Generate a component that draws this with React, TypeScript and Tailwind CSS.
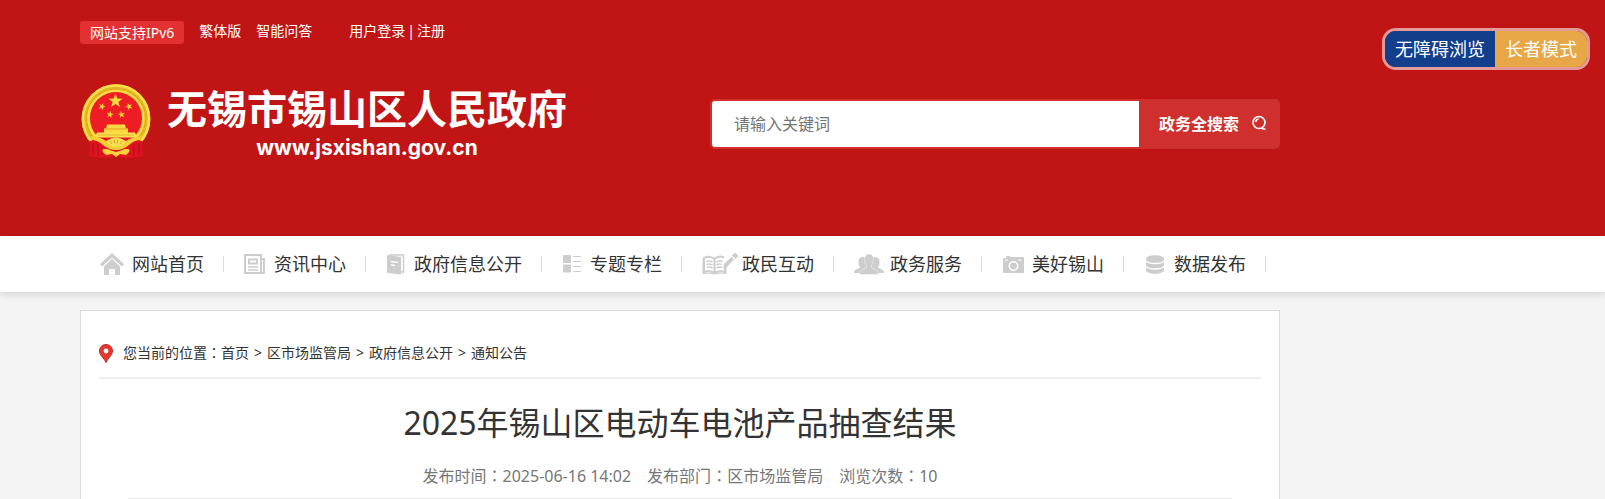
import React from "react";

const star = (cx: number, cy: number, r: number, rot = 0) =>
  Array.from({ length: 10 }, (_, i) => {
    const a = ((rot - 90 + i * 36) * Math.PI) / 180;
    const q = i % 2 ? r * 0.4 : r;
    return `${(cx + q * Math.cos(a)).toFixed(2)},${(cy + q * Math.sin(a)).toFixed(2)}`;
  }).join(" ");

function Emblem() {
  return (
    <svg viewBox="0 0 70 75" className="h-[75px] w-[70px] shrink-0" aria-hidden="true">
      <ellipse cx="35" cy="35" rx="34.500" ry="35" fill="#e3b726" />
      <ellipse cx="35" cy="35" rx="33" ry="33.500" fill="none" stroke="#fbe04a" strokeWidth="2.500" />
      <circle cx="35" cy="34.500" r="29.500" fill="none" stroke="#d8a422" strokeWidth="1" strokeDasharray="4 2" />
      <circle cx="35" cy="34.500" r="27.500" fill="none" stroke="#f9dc42" strokeWidth="2.500" />
      <circle cx="35" cy="34" r="26" fill="#ee1c25" />
      <polygon points={star(34.5, 17, 7.5)} fill="#fbd93a" />
      <polygon points={star(21, 22.5, 3.8, 20)} fill="#f7ce36" />
      <polygon points={star(48, 22.5, 3.8, -20)} fill="#f7ce36" />
      <polygon points={star(29, 30.5, 3.8, 10)} fill="#f7ce36" />
      <polygon points={star(40.5, 30.5, 3.8, -10)} fill="#f7ce36" />
      <path d="M26 40.500h18l1 4h2v5H23v-5h2z" fill="#f9d840" />
      <path d="M24 45h22" stroke="#d9a426" />
      <path d="M16 48.500h38l2 5H14z" fill="#fade4b" />
      <path d="M17 51h36" stroke="#dfae2b" strokeWidth=".8" />
      <path d="M11 54h48l-1 19-12 1-11-2-11 2-12-1z" fill="#e3131f" />
      <path d="M10 52 Q20 53 25 57 Q30 61 35 61 Q40 61 45 57 Q50 53 60 52 L59 56 Q52 57 48 61 Q42 66 35 66 Q28 66 22 61 Q18 57 11 56Z" fill="#f4cd37" />
      <path d="M25 57 Q35 50 45 57 Q41 63 35 63 Q29 63 25 57Z" fill="#fbdf4e" />
      <path d="M29 57l2 3M33 55.500l1 4M37 55.500l-1 4M41 57l-2 3" stroke="#d49a20" strokeWidth=".9" />
      <path d="M20 66q5-2 10 .5l5 1.500 5-1.500q5-2.500 10-.5l-5 5-6-1-4 3-4-3-6 1z" fill="#f8d43a" />
      <path d="M9 57q6-2 11 3 3 4 1 9l-1 5q-3-3-6-1-3 1-6-2zM61 57q-6-2-11 3-3 4-1 9l1 5q3-3 6-1 3 1 6-2z" fill="#dd1420" />
      <path d="M12 59v12M17 60v12M58 59v12M53 60v12" stroke="#ab0c17" />
    </svg>
  );
}

const G = "#cdcdcd";

const HomeIcon = () => (
  <svg viewBox="0 0 24 22" className="h-[22px] w-6" fill={G}>
    <path d="M12 0L24 11l-2 2.500L12 4.500 2 13.500 0 11z" />
    <path d="M12 6l8 7.500V22h-5v-6H9v6H4v-8.500z" />
  </svg>
);
const NewsIcon = () => (
  <svg viewBox="0 0 21 21" className="h-[21px] w-[21px]" fill="none" stroke={G} strokeWidth="2">
    <path d="M1 1h16v18H1zM17 5h3v14H3" />
    <path d="M5 5.500h8v4H5z" />
    <path d="M4 13h10M4 16h10" strokeWidth="1.500" />
  </svg>
);
const BookIcon = () => (
  <svg viewBox="0 0 18 21" className="h-[21px] w-[18px]">
    <path d="M2 1h14.500v17H13" fill="none" stroke={G} strokeWidth="1.500" />
    <path d="M0 2q0-1 1-1l13 2v17.500L1 19q-1 0-1-1z" fill={G} />
    <path d="M4 7.500l7 1M4 11l4 .5" stroke="#fff" strokeWidth="1.500" />
  </svg>
);
const ListIcon = () => (
  <svg viewBox="0 0 18 18" className="h-[18px] w-[18px]">
    <rect width="8" height="8" rx="1" fill={G} />
    <rect y="9.500" width="8" height="8" rx="1" fill={G} />
    <path d="M10 1.500h8M10 6.500h8M10 11.500h8M10 16.500h8" stroke={G} strokeWidth="1.200" />
  </svg>
);
const OpenBookIcon = () => (
  <svg viewBox="0 0 36 22" className="h-[22px] w-9" fill="none" stroke={G}>
    <path d="M12.500 6Q8 2 2 5v14q6-2 10.500 1Q17 17 23 19v-6M12.500 6Q17 2 22 4.500M12.500 6v14" strokeWidth="2" />
    <path d="M1 6v14.500q6-1 11.500.5Q18 19.500 24 20.500V14" />
    <path d="M4.500 8.500q3-1 6 .5M4.500 11.500q3-1 6 .5M4.500 14.500q3-1 6 .5M14.500 9q3-1.500 6-.5M14.500 12q3-1.500 5-.5M14.500 15q3-1.500 6-.5" strokeWidth="1.500" />
    <path d="M21 15l1.500-4.500 7-6.500 2.500 2.500-6.500 7z" fill={G} stroke="none" />
    <path d="M30.500 2.500L33 0l3 3-2.500 2.500z" fill={G} stroke={G} />
  </svg>
);
const PeopleIcon = () => (
  <svg viewBox="0 0 30 21" className="h-[21px] w-[30px]" fill={G}>
    <path d="M8 3q3-1 3.500 2 0 5 2 8l-5 3-1 3H0q0-3 3-4 3-1 3-2Q4 11 4.500 7 4.500 4 8 3z" />
    <path d="M22 3q-3-1-3.500 2 0 5-2 8l5 3 1 3H30q0-3-3-4-3-1-3-2 2-2 1.500-6 0-3-3.500-4z" />
    <path d="M15 0c3 0 4.500 2 4.500 5 0 3-1 5-2 6.500v2q1 1 4 2 3 1 3 5h-19q0-4 3-5 3-1 4-2v-2c-1-1.500-2-3.500-2-6.500 0-3 1.500-5 4.500-5z" stroke="#fff" strokeWidth=".4" />
  </svg>
);
const CameraIcon = () => (
  <svg viewBox="0 0 21 19" className="h-[19px] w-[21px]">
    <path d="M1 3h2V1h4v1h13q1 0 1 1v14q0 1-1 1H1q-1 0-1-1V4q0-1 1-1z" fill={G} />
    <circle cx="10.500" cy="11" r="4.200" fill="none" stroke="#fff" strokeWidth="1.600" />
    <path d="M15 5h4M2 5h3" stroke="#fff" strokeWidth="1.200" />
  </svg>
);
const DataIcon = () => (
  <svg viewBox="0 0 18 19" className="h-[19px] w-[18px]">
    <path d="M0 4c0-5 18-5 18 0v11c0 5-18 5-18 0z" fill={G} />
    <path d="M0 5.500c2 4 16 4 18 0M0 11c2 4 16 4 18 0" fill="none" stroke="#fff" strokeWidth="1.300" />
  </svg>
);

const nav = [
  { label: "网站首页", icon: <HomeIcon />, box: "w-8" },
  { label: "资讯中心", icon: <NewsIcon />, box: "w-[30px]" },
  { label: "政府信息公开", icon: <BookIcon />, box: "w-7 pl-px" },
  { label: "专题专栏", icon: <ListIcon />, box: "w-7 pl-px" },
  { label: "政民互动", icon: <OpenBookIcon />, box: "w-10" },
  { label: "政务服务", icon: <PeopleIcon />, box: "w-9" },
  { label: "美好锡山", icon: <CameraIcon />, box: "w-[30px] pl-px" },
  { label: "数据发布", icon: <DataIcon />, box: "w-[30px] pl-0.5" },
];

const crumbs = ["首页", "区市场监管局", "政府信息公开", "通知公告"];

const Colon = () => <span className="font-['Noto_Sans_CJK_TC',sans-serif] leading-none">：</span>;

export default function App() {
  return (
    <div className="relative flex min-h-screen flex-col bg-[#f4f4f4] font-['Noto_Sans','Noto_Sans_CJK_SC',sans-serif] text-[#333]">
      <header className="bg-[#c11515] pb-[76px] pl-20 pt-[21px] text-white">
        <div className="max-w-[1200px]">
          <div className="flex items-start text-sm leading-5">
            <a href="#ipv6" className="rounded-[3px] bg-[#e33030] px-[10px] leading-[23px]">网站支持IPv6</a>
            <a href="#traditional" className="ml-[15px]">繁体版</a>
            <a href="#qa" className="ml-[15px]">智能问答</a>
            <div className="ml-[37px] flex gap-[2px]">
              <a href="#login">用户登录</a>
              <span>|</span>
              <a href="#register">注册</a>
            </div>
          </div>
          <div className="mt-10 flex items-start justify-between">
            <a href="#home" className="flex items-start gap-4 pl-[1px]">
              <Emblem />
              <span className="block text-center font-bold">
                <span className="block font-['Liberation_Sans','Noto_Sans_CJK_SC',sans-serif] text-[40px] leading-[52px]">无锡市锡山区人民政府</span>
                <span className="block font-['Inter',sans-serif] text-[21px] leading-6">www.jsxishan.gov.cn</span>
              </span>
            </a>
            <form className="mt-[15px] flex h-[50px] w-[570px] rounded-[5px] border-2 border-[#d0302d] bg-[#d0302d]" onSubmit={(e) => e.preventDefault()}>
              <input
                type="text"
                aria-label="请输入关键词"
                placeholder="请输入关键词"
                className="min-w-0 flex-1 rounded-l-[3px] bg-white px-[22px] text-base text-[#333] outline-none placeholder:text-[#757575]"
              />
              <button type="submit" className="flex w-[139px] items-center gap-3 pl-5 text-base font-bold">
                政务全搜索
                <svg viewBox="0 0 16 16" className="mb-0.5 h-4 w-4" fill="none" stroke="#fff" strokeWidth="1.700">
                  <circle cx="8" cy="7.500" r="6" />
                  <path d="M10.500 12.500l1.500 1.500h2.500M4.500 7q.5-2.500 3-3.200" />
                </svg>
              </button>
            </form>
          </div>
        </div>
      </header>

      <div className="absolute right-[15px] top-7 flex overflow-hidden rounded-[14px] border-3 border-[#e59a9a] text-lg leading-9 text-white">
        <button type="button" className="bg-[#133e8b] px-[10px]">无障碍浏览</button>
        <button type="button" className="bg-[#e8a746] px-[10px]">长者模式</button>
      </div>

      <nav className="bg-white pl-20 shadow-[0_2px_8px_rgba(0,0,0,0.15)]">
        <ul className="flex h-14 max-w-[1200px] items-center">
          {nav.map((n) => (
            <li key={n.label} className="shrink-0">
              <a href="#nav" className="flex items-center pl-5 text-lg leading-7">
                <span className={n.box}>{n.icon}</span>
                <span className="pr-[19px]">{n.label}</span>
                <span className="h-4 w-px bg-[#dcdcdc]" />
              </a>
            </li>
          ))}
        </ul>
      </nav>

      <main className="flex flex-1 flex-col pl-20 pt-[18px]">
        <article className="max-w-[1200px] flex-1 border border-b-0 border-[#dcdcdc] bg-white px-[18px] pt-6">
          <div className="flex items-center border-b-2 border-[#f0f0f0] pb-[14px] pt-2 text-sm leading-5">
            <svg viewBox="0 0 14 19" className="mr-[10px] h-[19px] w-[14px]">
              <path d="M7 .5c4 0 6.500 3 6.500 6.500C13.500 11 9 14 7 18.500 5 14 .5 11 .5 7 .5 3.500 3 .5 7 .5z" fill="#e8352e" stroke="#b92c27" />
              <circle cx="7" cy="7" r="2.400" fill="#fff" />
            </svg>
            <span>您当前的位置<Colon /></span>
            {crumbs.map((c, i) => (
              <React.Fragment key={c}>
                {i > 0 && <span className="px-[5px]">&gt;</span>}
                <a href="#crumb">{c}</a>
              </React.Fragment>
            ))}
          </div>
          <h1 className="pt-5 text-center text-[32px] leading-[48px]">2025年锡山区电动车电池产品抽查结果</h1>
          <div className="mx-[29px] flex justify-center gap-4 border-b border-[#e6e6e6] pb-[10px] pt-[17px] text-base leading-6 text-[#777]">
            <span>发布时间<Colon />2025-06-16 14:02</span>
            <span>发布部门<Colon />区市场监管局</span>
            <span>浏览次数<Colon />10</span>
          </div>
        </article>
      </main>
    </div>
  );
}
